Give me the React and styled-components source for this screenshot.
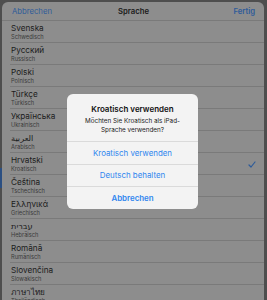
import React from 'react';
import styled, { createGlobalStyle } from 'styled-components';

const GlobalStyle = createGlobalStyle`
  html, body {
    margin: 0;
    padding: 0;
    background: #4e4e4e;
  }
  body {
    font-family: Inter, "Noto Sans", "DejaVu Sans", sans-serif;
    -webkit-font-smoothing: antialiased;
  }
`;

const Page = styled.div`
  position: relative;
  width: 267px;
  height: 300px;
  overflow: hidden;
  box-sizing: border-box;
  padding: 2px 3px 0 2px;
  background: #4e4e4e;
`;

const EdgeHighlight = styled.div`
  position: absolute;
  left: 0;
  top: 168px;
  width: 2px;
  height: 20px;
  background: #2b4f82;
`;

const Sheet = styled.div`
  height: 100%;
  background: #8d8d8d;
  border-radius: 6px 6px 0 0;
  overflow: hidden;
`;

const NavBar = styled.div`
  height: 18px;
  display: grid;
  grid-template-columns: 1fr auto 1fr;
  align-items: center;
  padding: 1px 9px 0 10px;
  box-sizing: border-box;
  height: 19px;
  border-bottom: 1px solid #7a7a7a;
`;

const NavButton = styled.span`
  font-size: 7.7px;
  color: #2d5b9a;
  font-weight: ${({ $bold }) => ($bold ? 600 : 400)};
  justify-self: ${({ $end }) => ($end ? 'end' : 'start')};
`;

const NavTitle = styled.span`
  font-size: 7.7px;
  font-weight: 600;
  color: #1a1a1a;
`;

const List = styled.div`
  display: flex;
  flex-direction: column;
`;

const Row = styled.div`
  position: relative;
  height: 22px;
  margin-left: 8px;
  padding: 2px 0 0 1px;
  box-sizing: border-box;
  border-bottom: 1px solid #7a7a7a;
  display: flex;
  flex-direction: column;
`;

const Name = styled.div`
  font-size: 8.2px;
  line-height: 10px;
  color: #1c1c1c;
`;

const Sub = styled.div`
  font-size: 5.7px;
  line-height: 7px;
  color: #3a3a3a;
`;

const Check = styled.svg`
  position: absolute;
  right: 8px;
  top: 8px;
`;

const Alert = styled.div`
  position: absolute;
  left: 67px;
  top: 94px;
  width: 131px;
  background: #f3f3f3;
  border-radius: 6px;
  overflow: hidden;
  display: flex;
  flex-direction: column;
`;

const AlertBody = styled.div`
  padding: 10px 6px 6px;
  text-align: center;
`;

const AlertTitle = styled.div`
  font-size: 8px;
  font-weight: 600;
  color: #111;
  line-height: 10px;
`;

const AlertMessage = styled.div`
  margin-top: 3px;
  font-size: 6.3px;
  line-height: 9px;
  color: #222;
`;

const AlertButton = styled.div`
  height: 21.5px;
  display: flex;
  align-items: center;
  justify-content: center;
  border-top: 1px solid #dadada;
  font-size: 7.9px;
  color: #2f86ef;
  font-weight: ${({ $bold }) => ($bold ? 600 : 400)};
`;

const languages = [
  ['Svenska', 'Schwedisch'],
  ['Русский', 'Russisch'],
  ['Polski', 'Polnisch'],
  ['Türkçe', 'Türkisch'],
  ['Українська', 'Ukrainisch'],
  ['العربية', 'Arabisch'],
  ['Hrvatski', 'Kroatisch', true],
  ['Čeština', 'Tschechisch'],
  ['Ελληνικά', 'Griechisch'],
  ['עברית', 'Hebräisch'],
  ['Română', 'Rumänisch'],
  ['Slovenčina', 'Slowakisch'],
  ['ภาษาไทย', 'Thailändisch'],
];

export default function App() {
  return (
    <Page>
      <GlobalStyle />
      <EdgeHighlight />
      <Sheet>
        <NavBar>
          <NavButton>Abbrechen</NavButton>
          <NavTitle>Sprache</NavTitle>
          <NavButton $bold $end>Fertig</NavButton>
        </NavBar>
        <List>
          {languages.map(([name, sub, checked]) => (
            <Row key={name}>
              <Name>{name}</Name>
              <Sub>{sub}</Sub>
              {checked && (
                <Check width="8" height="7" viewBox="0 0 8 7">
                  <path d="M1 4 L3 6 L7 1" fill="none" stroke="#2d5b9a" strokeWidth="1.2" strokeLinecap="round" strokeLinejoin="round" />
                </Check>
              )}
            </Row>
          ))}
        </List>
      </Sheet>
      <Alert>
        <AlertBody>
          <AlertTitle>Kroatisch verwenden</AlertTitle>
          <AlertMessage>
            Möchten Sie Kroatisch als iPad-
            <br />
            Sprache verwenden?
          </AlertMessage>
        </AlertBody>
        <AlertButton>Kroatisch verwenden</AlertButton>
        <AlertButton>Deutsch behalten</AlertButton>
        <AlertButton $bold>Abbrechen</AlertButton>
      </Alert>
    </Page>
  );
}
